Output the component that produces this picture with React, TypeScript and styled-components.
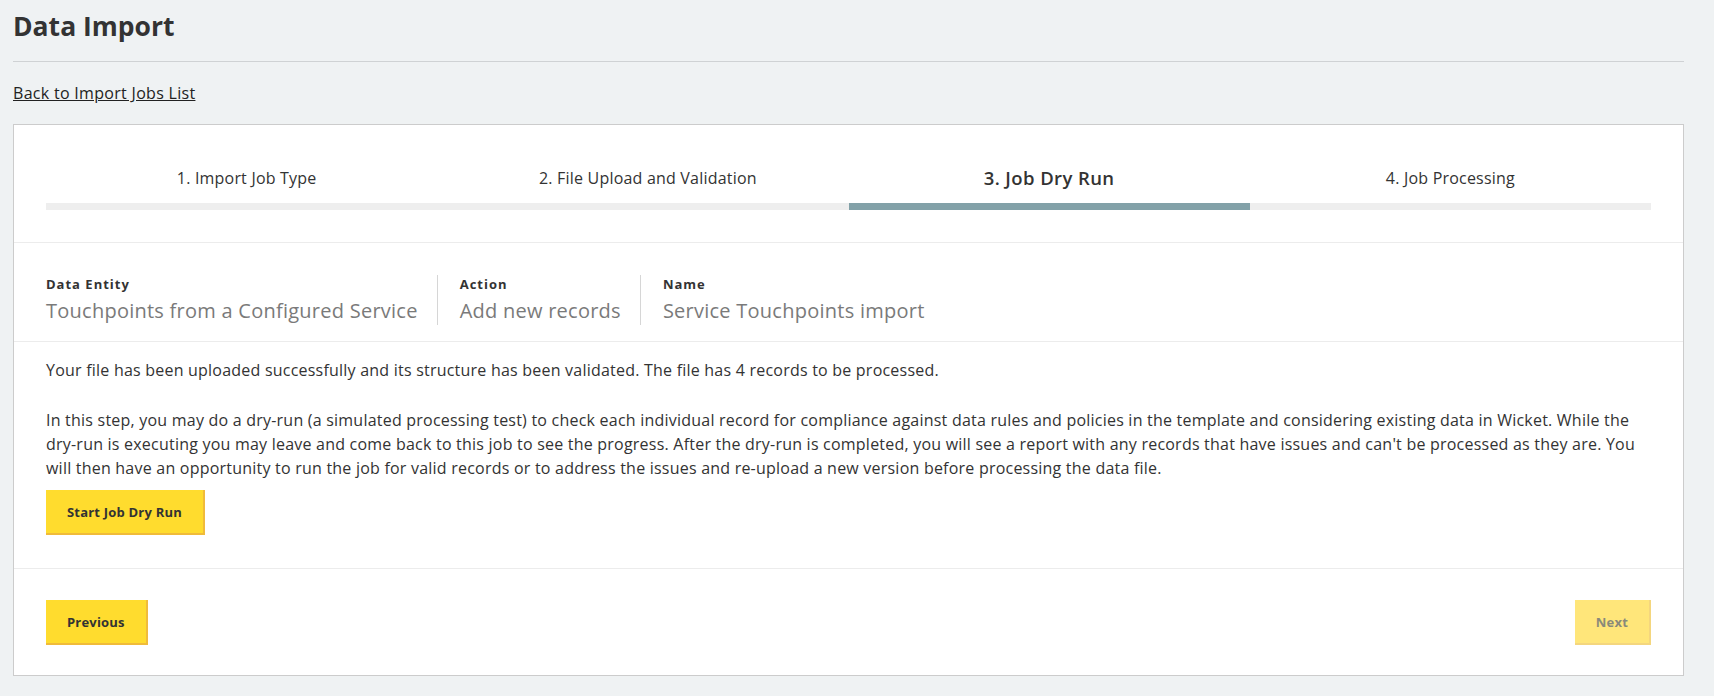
import styled, { createGlobalStyle } from 'styled-components';

const GlobalStyle = createGlobalStyle`
  html, body {
    margin: 0;
    padding: 0;
    background: #eff2f3;
    font-family: 'Open Sans', Lato, Arial, sans-serif;
    color: #333;
  }
`;

const Page = styled.div`
  padding: 6px 30px 20px 13px;
`;

const Title = styled.h1`
  margin: 0;
  font-size: 26.5px;
  font-weight: 700;
  line-height: 40px;
  color: #333;
`;

const Rule = styled.hr`
  margin: 15px 0 0 0;
  border: 0;
  border-top: 1px solid #cfd2d4;
`;

const BackLink = styled.a`
  display: inline-block;
  margin-top: 21px;
  font-size: 16px;
  letter-spacing: 0.3px;
  line-height: 20px;
  color: #222;
  text-decoration: underline;
  cursor: pointer;
`;

const Card = styled.div`
  margin-top: 20px;
  background: #fff;
  border: 1px solid #cccccc;
  width: 1669px;
`;

const Section = styled.div`
  padding: ${(p) => p.pad};
  border-bottom: ${(p) => (p.last ? 'none' : '1px solid #ececec')};
`;

const Steps = styled.div`
  display: grid;
  grid-template-columns: repeat(4, 1fr);
`;

const Step = styled.div`
  display: flex;
  flex-direction: column;
  align-items: center;
`;

const StepLabel = styled.div`
  height: 24px;
  line-height: 24px;
  font-size: ${(p) => (p.active ? '18.5px' : '16px')};
  font-weight: ${(p) => (p.active ? 600 : 400)};
  letter-spacing: ${(p) => (p.active ? '0.4px' : '0.2px')};
  color: #333;
`;

const StepBar = styled.div`
  margin-top: 13px;
  align-self: stretch;
  height: 7px;
  background: ${(p) => (p.active ? '#82a1a8' : '#eeeeee')};
`;

const InfoRow = styled.div`
  display: flex;
`;

const InfoItem = styled.div`
  padding: 0 19px 0 ${(p) => (p.first ? '0' : '22px')};
  border-left: ${(p) => (p.first ? 'none' : '1px solid #d6d6d6')};
  display: flex;
  flex-direction: column;
  gap: 4px;
`;

const InfoLabel = styled.div`
  font-size: 13px;
  font-weight: 700;
  letter-spacing: 1px;
  line-height: 18px;
  color: #333;
`;

const InfoValue = styled.div`
  font-size: 20px;
  letter-spacing: 0.25px;
  line-height: 28px;
  color: #7a7a7a;
`;

const Para = styled.p`
  margin: 0 0 ${(p) => p.gap || '26px'} 0;
  font-size: 16px;
  letter-spacing: 0.22px;
  line-height: 24px;
  color: #333;
`;

const YellowButton = styled.button`
  font-family: inherit;
  font-size: 13px;
  font-weight: 700;
  letter-spacing: 0.2px;
  color: ${(p) => (p.disabled ? '#8a8a7a' : '#333')};
  background: ${(p) => (p.disabled ? '#ffe67a' : '#ffdc2e')};
  border: 0;
  border-right: 2px solid ${(p) => (p.disabled ? '#f4d67e' : '#f0bb3a')};
  border-bottom: 2px solid ${(p) => (p.disabled ? '#f4d67e' : '#f0bb3a')};
  padding: 0 21px;
  height: 45px;
  cursor: ${(p) => (p.disabled ? 'default' : 'pointer')};
`;

const Footer = styled.div`
  display: flex;
  justify-content: space-between;
`;

const steps = ['1. Import Job Type', '2. File Upload and Validation', '3. Job Dry Run', '4. Job Processing'];

const info = [
  { label: 'Data Entity', value: 'Touchpoints from a Configured Service' },
  { label: 'Action', value: 'Add new records' },
  { label: 'Name', value: 'Service Touchpoints import' },
];

export default function App(): JSX.Element {
  const current = 2;

  return (
    <>
      <GlobalStyle />
      <Page>
        <Title>Data Import</Title>
        <Rule />
        <BackLink>Back to Import Jobs List</BackLink>
        <Card>
          <Section pad='41px 32px 32px'>
            <Steps>
              {steps.map((s, i) =>
                <Step key={s}>
                  <StepLabel active={i === current}>{s}</StepLabel>
                  <StepBar active={i === current} />
                </Step>
              )}
            </Steps>
          </Section>
          <Section pad='32px 32px 16px'>
            <InfoRow>
              {info.map((item, i) =>
                <InfoItem key={item.label} first={i === 0}>
                  <InfoLabel>{item.label}</InfoLabel>
                  <InfoValue>{item.value}</InfoValue>
                </InfoItem>
              )}
            </InfoRow>
          </Section>
          <Section pad='16px 32px 33px'>
            <Para>
              Your file has been uploaded successfully and its structure has been validated. The file has 4 records to be processed.
            </Para>
            <Para gap='10px'>
              In this step, you may do a dry-run (a simulated processing test) to check each individual record for compliance against data rules and policies in the template and considering existing data in Wicket. While the dry-run is executing you may leave and come back to this job to see the progress. After the dry-run is completed, you will see a report with any records that have issues and can't be processed as they are. You will then have an opportunity to run the job for valid records or to address the issues and re-upload a new version before processing the data file.
            </Para>
            <YellowButton>Start Job Dry Run</YellowButton>
          </Section>
          <Section pad='31px 32px 30px' last>
            <Footer>
              <YellowButton>Previous</YellowButton>
              <YellowButton disabled>Next</YellowButton>
            </Footer>
          </Section>
        </Card>
      </Page>
    </>
  );
}
